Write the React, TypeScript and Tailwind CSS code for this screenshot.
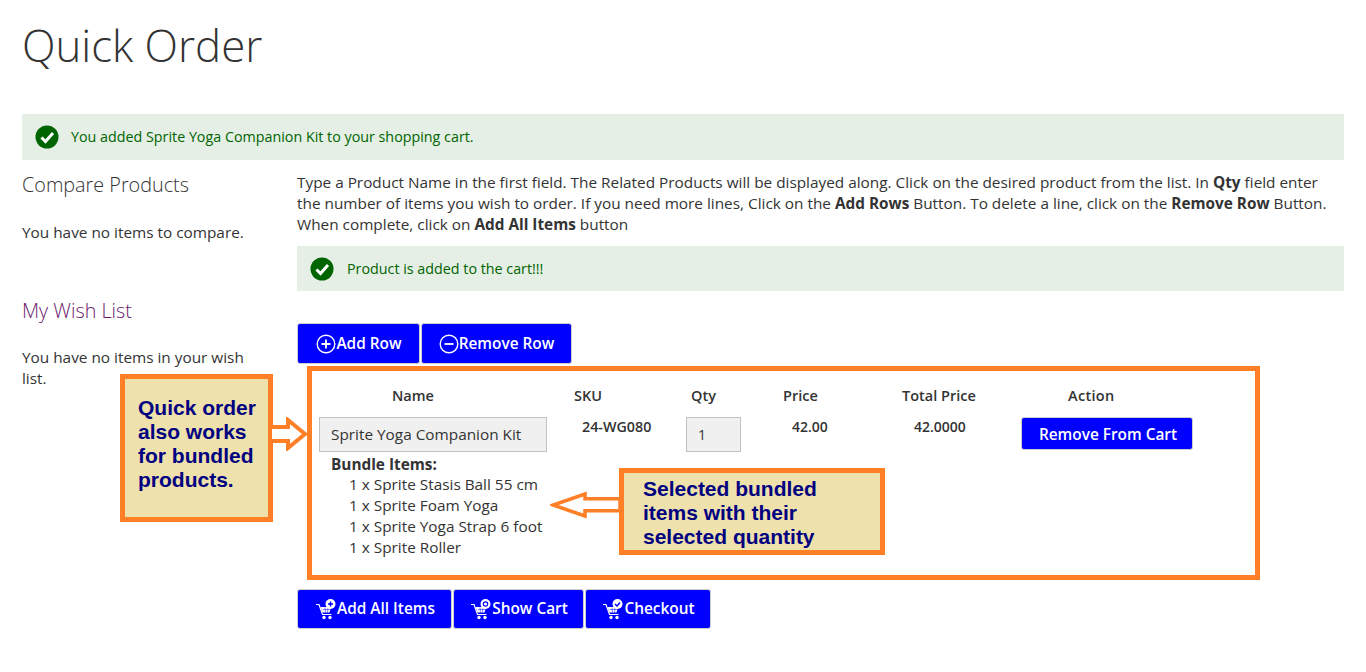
import type { ReactNode } from 'react';

const openSans = { fontFamily: '"Open Sans", sans-serif' };

function CheckBadge() {
  return (
    <svg width="24" height="24" viewBox="0 0 24 24" className="shrink-0">
      <circle cx="12" cy="12" r="11.5" fill="#006400" />
      <path d="M6.500 12.500l4 4 7.500-8.500" fill="none" stroke="#fff" strokeWidth="3" />
    </svg>
  );
}

function Notice({ children, className }: { children: ReactNode; className: string }) {
  return (
    <div className={`flex items-center bg-[#e5efe5] text-[#006400] ${className}`}>
      <CheckBadge />
      {children}
    </div>
  );
}

function CircleIcon({ minus }: { minus?: boolean }) {
  return (
    <svg width="20" height="20" viewBox="0 0 20 20" className="shrink-0">
      <circle cx="10" cy="10" r="8.800" fill="none" stroke="#fff" strokeWidth="1.400" />
      <path d={minus ? 'M5.500 10h9' : 'M5.500 10h9M10 5.500v9'} stroke="#fff" strokeWidth="1.800" />
    </svg>
  );
}

function CartIcon({ kind }: { kind: 'add' | 'show' | 'check' }) {
  return (
    <svg width="21" height="21" viewBox="0 0 21 21" className="shrink-0">
      <path d="M0 5.500h3l3.500 10h9" fill="none" stroke="#fff" strokeWidth="1.200" />
      <path d="M4.500 8h10.500l-1.500 5.500H6.500z" fill="#fff" />
      <path d="M7 10.500h7M9 8.500l.5 5M12 8.500l-.5 5" stroke="#00f" strokeWidth="0.500" />
      <circle cx="8" cy="18.500" r="1.700" fill="#fff" />
      <circle cx="14" cy="18.500" r="1.700" fill="#fff" />
      <circle cx="14.500" cy="5" r="5" fill="#fff" />
      {kind === 'add' && <path d="M12 5h5M14.500 2.500v5" stroke="#00f" strokeWidth="1.500" />}
      {kind === 'show' && <circle cx="14.500" cy="5" r="2.200" fill="none" stroke="#00f" strokeWidth="1.200" />}
      {kind === 'check' && <path d="M12 5l2 2 3-3.500" fill="none" stroke="#00f" strokeWidth="1.400" />}
    </svg>
  );
}

function BlueButton({ icon, children, className }: { icon?: ReactNode; children: ReactNode; className: string }) {
  return (
    <button
      className={`flex items-center justify-center rounded-[3px] border border-[#cdcdcd] bg-[#0000ff] text-[15.400px] leading-none font-semibold text-white ${className}`}
    >
      {icon}
      {children}
    </button>
  );
}

const bundleItems = [
  '1 x Sprite Stasis Ball 55 cm',
  '1 x Sprite Foam Yoga',
  '1 x Sprite Yoga Strap 6 foot',
  '1 x Sprite Roller',
];

export default function App() {
  return (
    <div className="relative h-[672px] overflow-hidden bg-white px-[22px] text-[15.350px] text-[#333]" style={openSans}>
      <h1 className="pt-[17px] text-[43.800px] leading-[56px] font-light">Quick Order</h1>

      <Notice className="mt-[41px] h-[46px] gap-[12px] pl-[13px]">
        <span className="text-[14.300px]">You added Sprite Yoga Companion Kit to your shopping cart.</span>
      </Notice>

      <div className="flex">
        <aside className="w-[275px] shrink-0">
          <h2 className="mt-[13px] text-[19.800px] leading-6 font-light">Compare Products</h2>
          <p className="mt-[25px] leading-5">You have no items to compare.</p>
          <h2 className="mt-[57px] text-[19.800px] leading-6 font-light text-[#6b1a6b]">My Wish List</h2>
          <p className="mt-[24px] w-[240px] leading-[21px]">You have no items in your wish list.</p>
        </aside>

        <main className="min-w-0 flex-1">
          <p className="mt-[12px] leading-[21px]">
            Type a Product Name in the first field. The Related Products will be displayed along. Click on the desired
            product from the list. In <b>Qty</b> field enter the number of items you wish to order. If you need more
            lines, Click on the <b>Add Rows</b> Button. To delete a line, click on the <b>Remove Row</b> Button. When
            complete, click on <b>Add All Items</b> button
          </p>

          <Notice className="mt-[11px] h-[45px] gap-[13px] pl-[13px]">
            <span className="text-[14.300px]">Product is added to the cart!!!</span>
          </Notice>

          <div className="mt-[32px] flex gap-px">
            <BlueButton icon={<CircleIcon />} className="h-[41px] w-[123px] pl-px">
              Add Row
            </BlueButton>
            <BlueButton icon={<CircleIcon minus />} className="h-[41px] w-[151px]">
              Remove Row
            </BlueButton>
          </div>

          <section className="mt-[2px] ml-[10px] h-[214px] w-[953px] border-[5px] border-[#ff7f27] pt-[15px] pl-[7px]">
            <div className="grid grid-cols-[241px_118px_92px_120px_118px_1fr] text-[14.500px] font-semibold">
              <div className="pl-[73px] leading-5">Name</div>
              <div className="pl-[14px] leading-5">SKU</div>
              <div className="pl-[13px] leading-5">Qty</div>
              <div className="pl-[13px] leading-5">Price</div>
              <div className="pl-[12px] leading-5">Total Price</div>
              <div className="pl-[60px] leading-5 tracking-[0.3px]">Action</div>
            </div>

            <div className="mt-[11px] grid grid-cols-[241px_118px_92px_120px_118px_1fr] font-semibold">
              <div>
                <div className="flex h-[35px] w-[228px] items-center border border-[#c2c2c2] bg-[#f0f0f0] pl-[11px] font-normal">
                  Sprite Yoga Companion Kit
                </div>
              </div>
              <div className="pl-[22px] text-[14.300px] leading-5">24-WG080</div>
              <div>
                <div className="ml-[8px] flex h-[35px] w-[55px] items-center border border-[#c2c2c2] bg-[#f0f0f0] pl-[11px] text-[14px] font-normal">
                  1
                </div>
              </div>
              <div className="pl-[22px] text-[14px] leading-5">42.00</div>
              <div className="pl-[24px] text-[14px] leading-5">42.0000</div>
              <div className="pl-[13px]">
                <BlueButton className="h-[33px] w-[172px] pt-[2px] pl-[2px]">Remove From Cart</BlueButton>
              </div>
            </div>

            <div className="pl-[12px]">
              <div className="mt-[2px] leading-5 font-bold">Bundle Items:</div>
              <ul className="pl-[18px] leading-[21px]">
                {bundleItems.map(item => (
                  <li key={item}>{item}</li>
                ))}
              </ul>
            </div>
          </section>

          <div className="mt-[9px] flex gap-px">
            <BlueButton icon={<CartIcon kind="add" />} className="h-[40px] w-[155px] pl-[2px]">
              Add All Items
            </BlueButton>
            <BlueButton icon={<CartIcon kind="show" />} className="h-[40px] w-[131px] pl-[2px]">
              Show Cart
            </BlueButton>
            <BlueButton icon={<CartIcon kind="check" />} className="h-[40px] w-[126px] pl-[2px]">
              Checkout
            </BlueButton>
          </div>
        </main>
      </div>

      {/* screenshot annotations on top of the page */}
      <div
        className="absolute top-[374px] left-[120px] h-[148px] w-[153px] border-[5px] border-[#ff7f27] bg-[#eee1ab] pt-[17px] pl-[13px] text-[21px] leading-6 font-bold text-[#000080]"
        style={{ fontFamily: '"Liberation Sans", sans-serif' }}
      >
        Quick order
        <br />
        also works
        <br />
        for bundled
        <br />
        products.
      </div>
      <svg width="38" height="34" viewBox="0 0 38 34" className="absolute top-[417px] left-[271px]">
        <path d="M1 10h16V3l17 14-17 14v-7H1" fill="#fff" stroke="#ff7f27" strokeWidth="4" />
      </svg>
      <div
        className="absolute top-[468px] left-[619px] h-[87px] w-[266px] border-[5px] border-[#ff7f27] bg-[#eee1ab] pt-[4px] pl-[19px] text-[21px] leading-6 font-bold text-[#000080]"
        style={{ fontFamily: '"Liberation Sans", sans-serif' }}
      >
        Selected bundled
        <br />
        items with their
        <br />
        selected quantity
      </div>
      <svg width="71" height="28" viewBox="0 0 71 28" className="absolute top-[491px] left-[550px]">
        <path d="M70 7.700H35V3L3 14l32 11v-5.300h35z" fill="#fff" stroke="#ff7f27" strokeWidth="3.500" />
      </svg>
    </div>
  );
}
